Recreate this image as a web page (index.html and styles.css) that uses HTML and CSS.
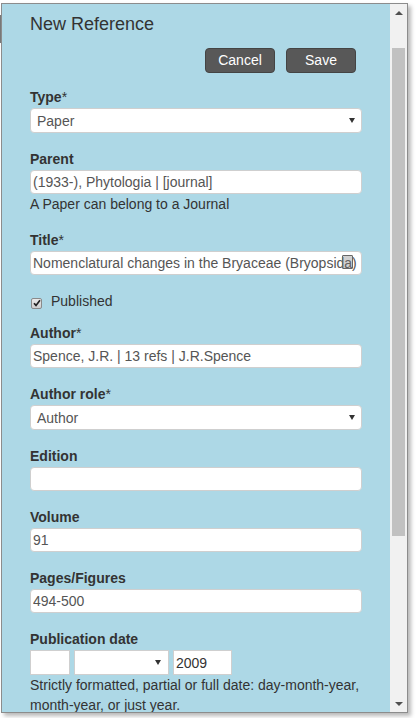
FILE: index.html
```html
<!DOCTYPE html>
<html>
<head>
<meta charset="utf-8">
<link rel="stylesheet" href="styles.css">
</head>
<body>
<div class="behind"></div>
<div class="dialog">
  <div class="content">
    <h1 class="title">New Reference</h1>
    <div class="actions">
      <button class="btn">Cancel</button>
      <button class="btn">Save</button>
    </div>

    <div class="field">
      <label class="lbl">Type<span class="req">*</span></label>
      <div class="select"><span>Paper</span><span class="caret"></span></div>
    </div>

    <div class="field">
      <label class="lbl">Parent</label>
      <input class="inp" type="text" value="(1933-), Phytologia | [journal]">
      <div class="help">A Paper can belong to a Journal</div>
    </div>

    <div class="field">
      <label class="lbl">Title<span class="req">*</span></label>
      <div class="inp-wrap">
        <input class="inp" type="text" value="Nomenclatural changes in the Bryaceae (Bryopsida)">
        <span class="ext-icon"></span>
      </div>
    </div>

    <div class="check-row">
      <span class="cbox">
        <svg width="8" height="8" viewBox="0 0 8 8"><path d="M1 4.2 L3 6.4 L7 1.2" fill="none" stroke="#222" stroke-width="1.7"/></svg>
      </span>
      <span class="check-lbl">Published</span>
    </div>

    <div class="field">
      <label class="lbl">Author<span class="req">*</span></label>
      <input class="inp" type="text" value="Spence, J.R. | 13 refs | J.R.Spence">
    </div>

    <div class="field">
      <label class="lbl">Author role<span class="req">*</span></label>
      <div class="select"><span>Author</span><span class="caret"></span></div>
    </div>

    <div class="field">
      <label class="lbl">Edition</label>
      <input class="inp" type="text" value="">
    </div>

    <div class="field">
      <label class="lbl">Volume</label>
      <input class="inp" type="text" value="91">
    </div>

    <div class="field">
      <label class="lbl">Pages/Figures</label>
      <input class="inp" type="text" value="494-500">
    </div>

    <div class="field">
      <label class="lbl">Publication date</label>
      <div class="date-row">
        <input class="dinp day" type="text" value="">
        <div class="dsel"><span class="caret"></span></div>
        <input class="dinp year" type="text" value="2009">
      </div>
      <div class="help">Strictly formatted, partial or full date: day-month-year, month-year, or just year.</div>
    </div>
  </div>
  <div class="scrollbar">
    <div class="sb-btn"><span class="sb-up"></span></div>
    <div class="sb-track"><div class="sb-thumb"></div></div>
    <div class="sb-btn"><span class="sb-down"></span></div>
  </div>
</div>
</body>
</html>
```
FILE: styles.css
```css
html, body {
  margin: 0;
  padding: 0;
  background: #ffffff;
  font-family: "Liberation Sans", Arial, sans-serif;
  color: #333;
}
body {
  position: relative;
  width: 418px;
  height: 718px;
  overflow: hidden;
}
.behind {
  position: absolute;
  left: 0;
  top: 15px;
  width: 2px;
  height: 28px;
  background: #7a7a7a;
}
.dialog {
  position: relative;
  margin: 3px 0 0 1px;
  width: 407px;
  height: 710px;
  box-sizing: border-box;
  border: 1px solid #8c8c8c;
  box-shadow: 3px 3px 4px rgba(0,0,0,0.28);
  display: flex;
  overflow: hidden;
}
.content {
  flex: 1;
  background: #add8e6;
  padding: 9px 28px 0 28px;
  overflow: hidden;
}
.title {
  margin: 0;
  font-size: 18px;
  font-weight: normal;
  line-height: 22px;
  color: #333;
}
.actions {
  display: flex;
  justify-content: flex-end;
  gap: 11px;
  margin: 13px 6px 14px 0;
}
.btn {
  width: 70px;
  height: 25px;
  box-sizing: border-box;
  background: #585858;
  border: 1px solid #444;
  border-radius: 4px;
  color: #fff;
  font-family: "Liberation Sans", Arial, sans-serif;
  font-size: 14px;
  padding: 0;
  line-height: 23px;
}
.field {
  margin-bottom: 16px;
}
.lbl {
  display: block;
  height: 20px;
  font-size: 14px;
  font-weight: bold;
  line-height: 20px;
  margin-bottom: 1px;
  color: #333;
}
.req {
  font-weight: normal;
}
.inp {
  display: block;
  width: 100%;
  height: 24px;
  box-sizing: border-box;
  border: 1px solid #cfcfcf;
  border-radius: 4px;
  background: #fff;
  padding: 0 2px;
  margin: 0;
  font-family: "Liberation Sans", Arial, sans-serif;
  font-size: 14px;
  color: #555;
  outline: none;
}
.inp-wrap {
  position: relative;
}
.ext-icon {
  position: absolute;
  right: 9px;
  top: 4px;
  width: 9px;
  height: 12px;
  border: 1px solid #666;
  border-radius: 1px;
  background: rgba(120,120,120,0.35);
}
.select {
  display: flex;
  align-items: center;
  justify-content: space-between;
  height: 25px;
  box-sizing: border-box;
  border: 1px solid #cfcfcf;
  border-radius: 4px;
  background: #fff;
  padding: 0 6px 0 6px;
  font-size: 14px;
  color: #555;
}
.caret {
  width: 0;
  height: 0;
  border-left: 3px solid transparent;
  border-right: 3px solid transparent;
  border-top: 5px solid #333;
}
.help {
  font-size: 14px;
  line-height: 20px;
  color: #333;
}
.check-row {
  display: flex;
  align-items: center;
  height: 20px;
  margin-bottom: 12px;
}
.cbox {
  width: 11px;
  height: 11px;
  box-sizing: border-box;
  margin: 4px 9px 0 1px;
  border: 1px solid #8a8a8a;
  border-radius: 2px;
  background: linear-gradient(#eaeaea, #cfcfcf);
  display: flex;
  align-items: center;
  justify-content: center;
}
.cbox svg {
  display: block;
}
.check-lbl {
  font-size: 14px;
  color: #333;
}
.date-row {
  display: flex;
  gap: 4px;
  height: 25px;
}
.dinp {
  height: 25px;
  box-sizing: border-box;
  border: 1px solid #cfcfcf;
  background: #fff;
  margin: 0;
  padding: 0 2px;
  font-family: "Liberation Sans", Arial, sans-serif;
  font-size: 14px;
  color: #333;
  outline: none;
  border-radius: 0;
}
.day { width: 40px; }
.year { width: 59px; }
.dsel {
  width: 95px;
  height: 25px;
  box-sizing: border-box;
  border: 1px solid #cfcfcf;
  background: #fff;
  display: flex;
  align-items: center;
  justify-content: flex-end;
  padding-right: 7px;
}
.scrollbar {
  width: 17px;
  background: #f1f1f1;
  display: flex;
  flex-direction: column;
}
.sb-btn {
  height: 17px;
  display: flex;
  align-items: center;
  justify-content: center;
}
.sb-up {
  width: 0;
  height: 0;
  border-left: 4px solid transparent;
  border-right: 4px solid transparent;
  border-bottom: 4px solid #505050;
}
.sb-down {
  width: 0;
  height: 0;
  border-left: 4px solid transparent;
  border-right: 4px solid transparent;
  border-top: 4px solid #505050;
}
.sb-track {
  flex: 1;
}
.sb-thumb {
  margin: 27px 0 0 2px;
  width: 13px;
  height: 488px;
  background: #c1c1c1;
}
```
